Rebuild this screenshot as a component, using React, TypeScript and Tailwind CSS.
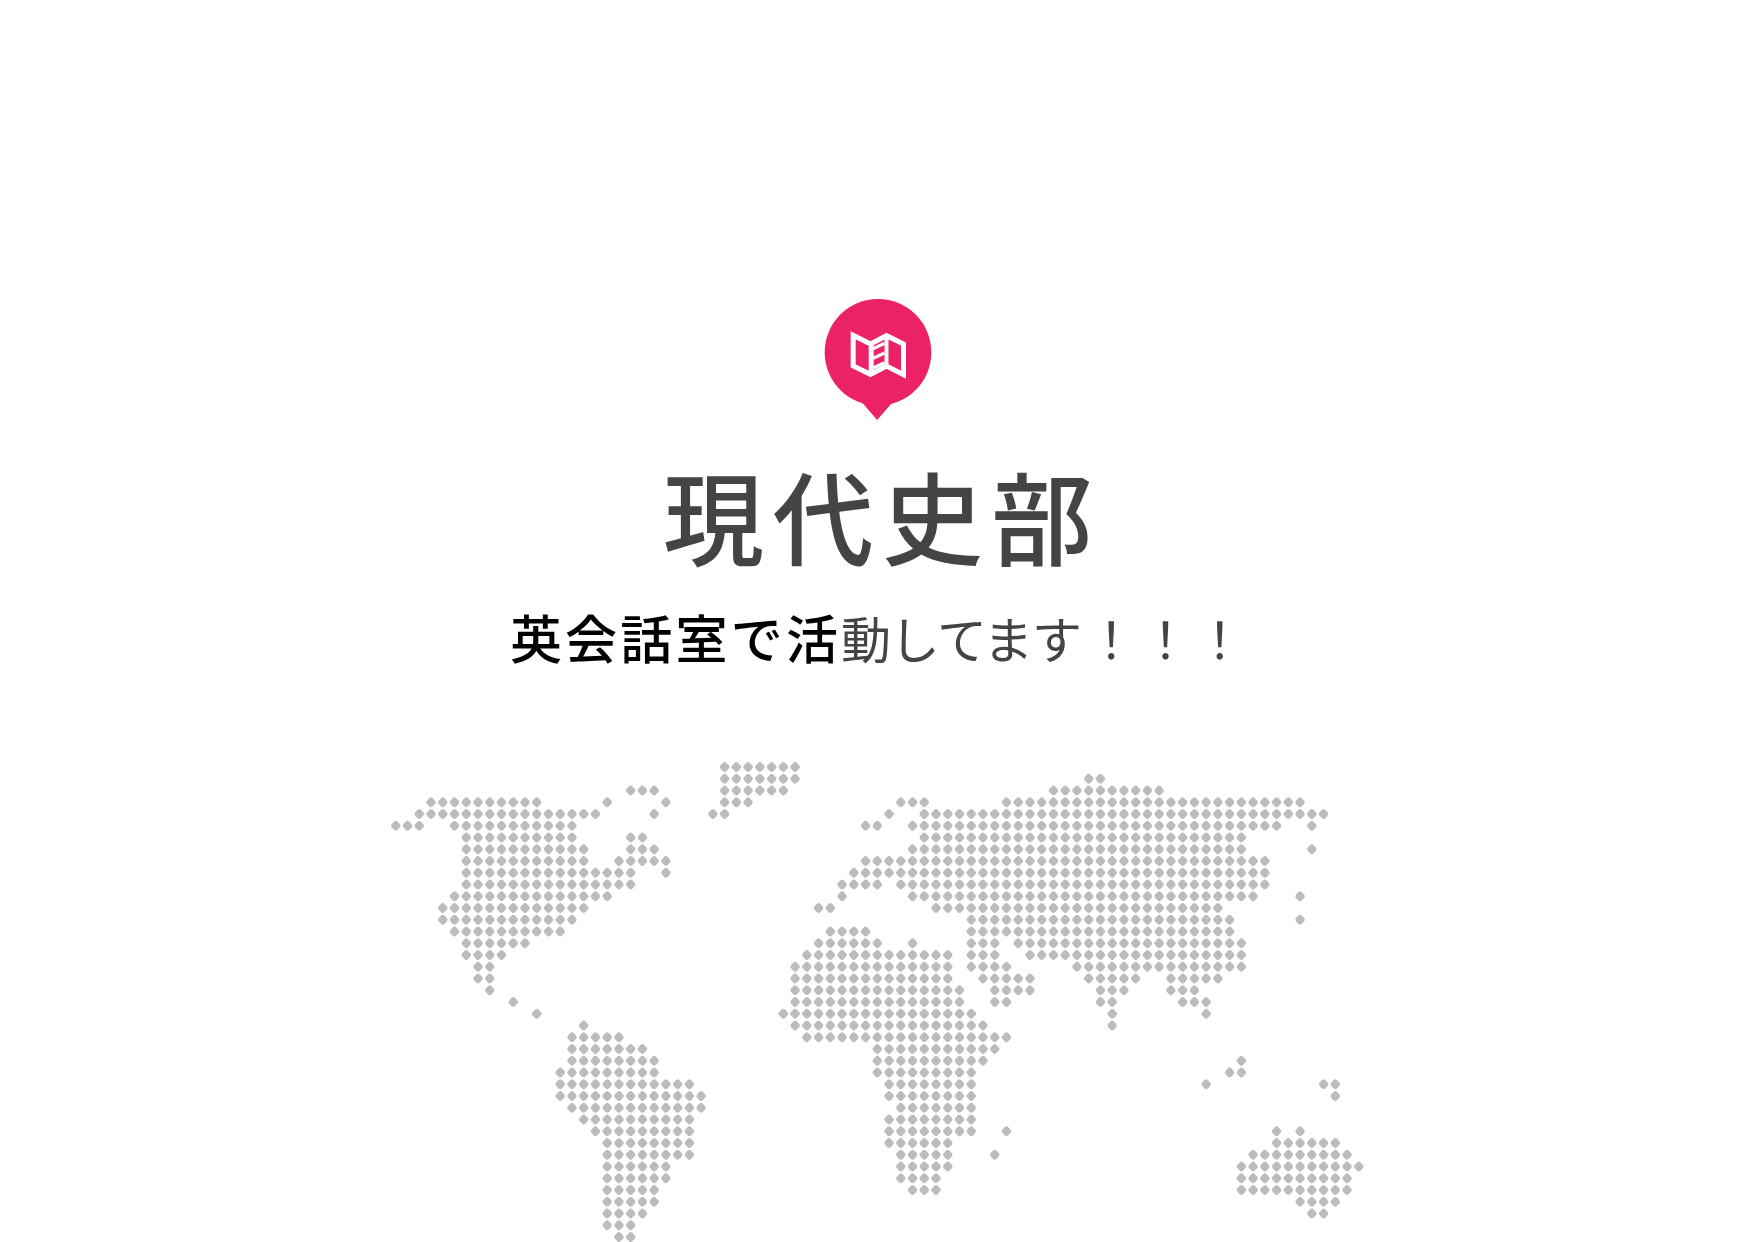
const ROWS: [number, number, number][] = ([
  [0,28,34],[1,28,34],[1,59,60],
  [2,20,22],[2,28,33],[2,56,65],
  [3,3,12],[3,18,18],[3,23,23],[3,28,30],[3,43,45],[3,52,77],
  [4,2,17],[4,22,22],[4,27,28],[4,42,42],[4,45,79],
  [5,0,2],[5,5,15],[5,40,41],[5,44,75],[5,78,78],
  [6,6,15],[6,20,21],[6,45,72],
  [7,6,16],[7,20,22],[7,44,72],[7,78,78],
  [8,6,16],[8,19,23],[8,40,74],
  [9,6,20],[9,23,23],[9,39,74],
  [10,6,20],[10,38,41],[10,43,74],
  [11,5,18],[11,38,38],[11,44,73],[11,77,77],
  [12,4,16],[12,36,37],[12,46,70],
  [13,4,15],[13,49,71],[13,77,77],
  [14,5,14],[14,37,40],[14,49,71],
  [15,6,11],[15,36,41],[15,44,44],[15,49,51],[15,53,72],
  [16,6,9],[16,35,47],[16,49,51],[16,54,72],
  [17,7,8],[17,34,47],[17,49,52],[17,58,72],
  [18,7,8],[18,34,47],[18,50,54],[18,59,63],[18,66,70],
  [19,8,8],[19,34,48],[19,51,54],[19,60,62],[19,66,68],
  [20,10,10],[20,34,48],[20,51,52],[20,60,61],[20,67,69],
  [21,12,12],[21,33,49],[21,61,61],[21,69,69],
  [22,16,16],[22,34,50],[22,61,61],
  [23,15,19],[23,35,52],
  [24,15,21],[24,41,51],
  [25,15,22],[25,41,50],[25,72,72],
  [26,14,22],[26,41,49],[26,71,72],
  [27,14,25],[27,42,49],[27,69,69],[27,79,80],
  [28,14,26],[28,42,49],[28,80,80],
  [29,15,26],[29,43,49],
  [30,16,25],[30,42,49],
  [31,17,25],[31,42,49],[31,52,52],[31,75,75],[31,77,77],
  [32,18,25],[32,42,47],[32,75,80],
  [33,18,25],[33,43,47],[33,51,51],[33,73,81],
  [34,18,23],[34,43,47],[34,72,82],
  [35,18,23],[35,43,46],[35,72,81],
  [36,18,22],[36,44,46],[36,72,81],
  [37,18,22],[37,77,80],
  [38,18,21],[38,78,79],
  [39,18,20],
  [40,19,20],
] as [number, number, number][]);

function WorldMap() {
  const dots: { x: number; y: number }[] = [];
  for (const [r, a, b] of ROWS) {
    for (let c = a; c <= b; c++) {
      dots.push({ x: 8.8 + c * 11.744, y: 9 + r * 11.75 });
    }
  }
  return (
    <svg width="982" height="484" viewBox="0 0 982 484" className="block">
      {dots.map((d, i) => (
        <rect
          key={i}
          x={d.x - 4.1}
          y={d.y - 4.1}
          width="8.2"
          height="8.2"
          rx="2.6"
          fill="#bcbcbc"
          transform={`rotate(45 ${d.x} ${d.y})`}
        />
      ))}
    </svg>
  );
}

function Pin() {
  return (
    <svg width="120" height="130" viewBox="112.5 75 360 390" className="block">
      <circle cx="292.5" cy="247" r="160" fill="#ec2266" />
      <path d="M240 392 L290 450 L340 392 Z" fill="#ec2266" />
      <path
        d="M218 196 L270 222 L318 197 L369 222 L369 314 L318 288 L270 313 L218 288 Z"
        fill="none"
        stroke="#ffffff"
        strokeWidth="15"
        strokeLinejoin="miter"
      />
      <path d="M272 220 V314" stroke="#ffffff" strokeWidth="15" fill="none" />
      <path d="M318 197 V288" stroke="#ffffff" strokeWidth="12" fill="none" />
      <path d="M278 236 L312 220 M278 265 L312 249 M278 294 L312 278" stroke="#ffffff" strokeWidth="10" fill="none" />
    </svg>
  );
}

export default function App() {
  return (
    <div className="flex h-[1242px] flex-col items-center overflow-hidden bg-white pt-[295px] font-['Noto_Sans_CJK_JP','Noto_Sans_CJK_SC',sans-serif]">
      <Pin />
      <h1 className="mt-[27px] pl-[9px] text-[101px] font-medium leading-[125px] tracking-[8.5px] text-[#444444]">現代史部</h1>
      <p className="mt-[25px] pl-[4px] text-[50px] font-normal leading-[70px] text-[#444444]">
        <span className="text-[52px] font-medium tracking-[3.2px] text-black">英会話室で活</span>
        <span className="tracking-[-1.3px]">動してま</span>
        <span className="tracking-[4.3px]">す！！！</span>
      </p>
      <div className="mt-[86px]">
        <WorldMap />
      </div>
    </div>
  );
}
